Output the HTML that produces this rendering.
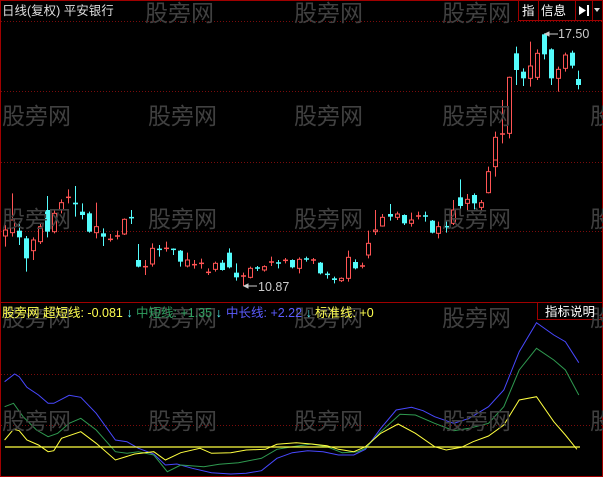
<!DOCTYPE html>
<html><head><meta charset="utf-8"><style>
html,body{margin:0;padding:0;background:#000;}
body{width:603px;height:477px;position:relative;overflow:hidden;font-family:"Liberation Sans","Noto Sans CJK SC",sans-serif;}
.t{position:absolute;white-space:nowrap;font-size:12.5px;line-height:14px;}
.a{color:#54fcfc;font-weight:bold;}
.wm{position:absolute;color:#404040;font-size:23px;line-height:26px;white-space:nowrap;}
</style></head><body>
<svg id="s" width="603" height="477" style="position:absolute;left:0;top:0">
<g stroke="#7a0c0c" stroke-dasharray="1,2" stroke-width="1">
<line x1="1" y1="21.5" x2="602" y2="21.5"/>
<line x1="1" y1="91.5" x2="602" y2="91.5"/>
<line x1="1" y1="162.5" x2="602" y2="162.5"/>
<line x1="1" y1="231.5" x2="602" y2="231.5"/>
<line x1="1" y1="374.5" x2="602" y2="374.5"/>
<line x1="1" y1="425.5" x2="602" y2="425.5"/>
</g>
<rect x="0.5" y="0.5" width="602" height="476" fill="none" stroke="#a00000"/>
<line x1="0" y1="302.5" x2="603" y2="302.5" stroke="#a00000"/>
<rect x="537.5" y="302.5" width="65" height="17" fill="none" stroke="#a00000"/>
<rect x="518.5" y="0.5" width="20" height="20" fill="none" stroke="#a00000"/>
<rect x="538.5" y="0.5" width="37" height="20" fill="none" stroke="#a00000"/>
<rect x="575.5" y="0.5" width="17" height="20" fill="none" stroke="#a00000"/>
<rect x="592.5" y="0.5" width="10" height="20" fill="none" stroke="#a00000"/>
<path d="M579 6 L586 10.5 L579 15 Z" fill="#fff"/><rect x="587" y="5" width="2" height="11" fill="#fff"/>
<path d="M594 8 L600 8 L597 12 Z" fill="#ddd"/>
<g id="c"></g>
<g id="l" fill="none" stroke-width="1"></g>
<line x1="5" y1="447" x2="580" y2="447" stroke="#ffff40" stroke-width="1.2"/>
<g stroke="#ccc" fill="#ccc"><line x1="546" y1="34" x2="558" y2="34"/><path d="M545 34 L549 32 L549 36Z"/>
<line x1="245" y1="286" x2="257" y2="286"/><path d="M244 286 L248 284 L248 288Z"/></g>
</svg>
<div class="wm" style="left:145px;top:0">股旁网</div><div class="wm" style="left:294px;top:0">股旁网</div><div class="wm" style="left:442px;top:0">股旁网</div>
<div class="wm" style="left:2px;top:103px">股旁网</div><div class="wm" style="left:148px;top:103px">股旁网</div><div class="wm" style="left:294px;top:103px">股旁网</div><div class="wm" style="left:442px;top:103px">股旁网</div><div class="wm" style="left:590px;top:103px">股</div>
<div class="wm" style="left:2px;top:206px">股旁网</div><div class="wm" style="left:148px;top:206px">股旁网</div><div class="wm" style="left:294px;top:206px">股旁网</div><div class="wm" style="left:442px;top:206px">股旁网</div><div class="wm" style="left:590px;top:206px">股</div>
<div class="wm" style="left:2px;top:305px">股旁网</div><div class="wm" style="left:148px;top:305px">股旁网</div><div class="wm" style="left:294px;top:305px">股旁网</div><div class="wm" style="left:442px;top:305px">股旁网</div><div class="wm" style="left:590px;top:305px">股</div>
<div class="wm" style="left:2px;top:408px">股旁网</div><div class="wm" style="left:148px;top:408px">股旁网</div><div class="wm" style="left:294px;top:408px">股旁网</div><div class="wm" style="left:442px;top:408px">股旁网</div><div class="wm" style="left:590px;top:408px">股</div>
<div class="t" style="left:2px;top:4px;color:#ddd">日线(复权) 平安银行</div>
<div class="t" style="left:522px;top:4px;color:#fff">指</div>
<div class="t" style="left:541px;top:4px;color:#fff">信息</div>
<div class="t" style="left:558px;top:27px;color:#ccc">17.50</div>
<div class="t" style="left:258px;top:280px;color:#ccc">10.87</div>
<div class="t" style="left:2px;top:306px;color:#ffff50">股旁网 超短线: -0.081 <span class="a">↓</span></div>
<div class="t" style="left:136px;top:306px;color:#2fa060">中短线: +1.35 <span class="a">↓</span></div>
<div class="t" style="left:226px;top:306px;color:#5c5cff">中长线: +2.22 <span class="a">↓</span></div>
<div class="t" style="left:315px;top:306px;color:#ffff50">标准线: +0</div>
<div class="t" style="left:545px;top:305px;color:#fff">指标说明</div>
<script>
var N="http://www.w3.org/2000/svg";
var c=document.getElementById('c');
function el(t,a){var e=document.createElementNS(N,t);for(var k in a)e.setAttribute(k,a[k]);return e;}
var z2=[[12,1,210,228,195,260],[32,1,180,218,100,230],[50,0,212,232,185,255],[68,0,235,295,228,335],[86,1,240,272,232,300],[104,1,200,245,192,252],[122,0,150,215,108,232],[140,1,160,215,150,220],[158,1,128,150,118,160],[178,1,112,115,88,130],[196,0,128,133,78,170],[214,0,155,165,130,178],[232,0,160,215,155,218],[250,1,200,218,128,235],[268,0,220,230,205,258],[286,1,238,240,222,245],[304,1,228,232,212,238],[322,1,178,222,175,225],[340,0,173,176,150,192],[360,0,300,320,252,322],[378,1,320,324,300,345],[396,1,265,312,250,320],[414,0,268,272,255,290],[432,1,265,268,245,275],[450,0,268,272,265,285],[468,0,272,305,270,320],[486,1,300,318,278,322],[504,1,314,317,300,326],[522,1,310,313,296,326],[540,1,337,340,325,345],[558,1,310,328,305,335],[578,0,308,330,300,332],[596,0,278,322,265,325],[614,0,338,352,310,362],[632,1,348,351,338,378],[650,1,325,352,320,355],[668,0,324,327,318,333],[686,1,320,330,316,335],[704,1,306,309,290,318],[722,0,309,312,300,325],[740,1,301,304,294,310],[760,0,300,322,298,325],[778,1,298,325,292,340],[796,0,297,300,290,305],[814,1,300,303,294,312],[832,0,308,340,306,343],[850,0,343,346,335,356],[868,0,355,360,350,370],[886,1,355,362,352,366],[904,1,292,355,272,365],[922,0,306,325,298,328],[940,1,318,321,308,325],[958,1,250,285,212,295],[976,1,210,215,150,225],[994,1,172,198,162,200],[1014,0,162,170,132,182],[1032,1,162,172,155,180],[1050,0,165,190,163,195],[1068,1,180,190,158,200],[1086,1,168,172,155,178],[1104,0,168,172,155,185],[1122,0,182,218,180,220],[1140,1,200,220,185,235],[1160,0,200,203,185,218],[1178,1,150,190,120,195],[1196,0,112,138,58,148],[1214,1,118,130,102,152],[1232,0,105,130,100,148],[1250,1,128,142,120,150],[1270,1,35,98,20,100],[1288,1,0,20,-10,50]];
var z1=[[1288,1,412,480,395,480],[1306,1,402,406,300,430],[1324,1,232,400,230,415],[1342,0,160,210,140,255],[1360,0,215,235,205,258],[1378,1,198,235,125,260],[1396,1,160,232,148,240],[1414,0,103,163,100,178],[1432,0,148,235,145,255],[1450,1,208,235,200,275],[1468,1,165,205,158,215],[1486,0,158,197,152,205],[1504,0,237,255,212,268]];
function draw(a,off){a.forEach(function(d){var x=Math.round(d[0]/2.6)+0.5;var bt=d[2]/3+off,bb=d[3]/3+off,wt=d[4]/3+off,wb=d[5]/3+off;
var col=d[1]?"#ff5454":"#54fcfc";
if(off==160)wt=Math.max(wt,160);
c.appendChild(el('line',{x1:x,y1:wt,x2:x,y2:wb,stroke:col}));
var h=bb-bt;if(h<1.5){c.appendChild(el('line',{x1:x-2.5,y1:bt,x2:x+2.5,y2:bt,stroke:col,'stroke-width':1.5}));}
else if(d[1])c.appendChild(el('rect',{x:x-2,y:bt,width:4,height:h,fill:'#000',stroke:col}));
else c.appendChild(el('rect',{x:x-2.5,y:bt,width:5,height:h,fill:col}));});}
draw(z2,160);draw(z1,0);
var L=[["#4848ff",[[12,245],[38,222],[50,230],[70,262],[100,285],[125,310],[140,310],[180,286],[210,292],[250,340],[300,420],[330,425],[360,445],[400,462],[430,495],[460,492],[500,505],[550,518],[600,522],[640,520],[680,512],[720,475],[760,458],[800,452],[840,455],[880,465],[920,465],[950,448],[990,385],[1030,330],[1070,322],[1100,332],[1130,350],[1180,370],[1220,355],[1270,320],[1310,270],[1350,155],[1395,68],[1440,105],[1470,125],[1505,188]]],
["#2f9a50",[[12,320],[35,310],[60,350],[95,390],[125,410],[150,400],[180,370],[210,355],[250,390],[300,455],[330,460],[360,455],[400,465],[435,515],[470,495],[530,500],[570,493],[620,488],[680,475],[720,448],[760,440],[810,432],[850,440],[890,458],[930,455],[950,445],[990,395],[1040,343],[1080,345],[1130,370],[1180,392],[1220,385],[1270,370],[1310,320],[1350,210],[1395,145],[1440,180],[1470,210],[1505,285]]],
["#ffff40",[[12,420],[35,388],[50,392],[70,420],[100,435],[125,455],[140,452],[160,415],[210,395],[250,430],[300,480],[350,462],[400,455],[430,480],[470,458],[520,445],[550,460],[600,458],[640,450],[690,448],[720,433],[770,428],[810,432],[850,437],[880,448],[920,455],[950,440],[990,400],[1035,372],[1080,400],[1130,440],[1160,450],[1200,442],[1230,425],[1270,408],[1310,375],[1350,300],[1395,290],[1440,365],[1470,405],[1500,448]]]];
var g=document.getElementById('l');
L.forEach(function(s){g.appendChild(el('polyline',{stroke:s[0],points:s[1].map(function(p){return (p[0]/2.6).toFixed(1)+','+(p[1]/3+300).toFixed(1)}).join(' ')}));});
</script>
</body></html>
